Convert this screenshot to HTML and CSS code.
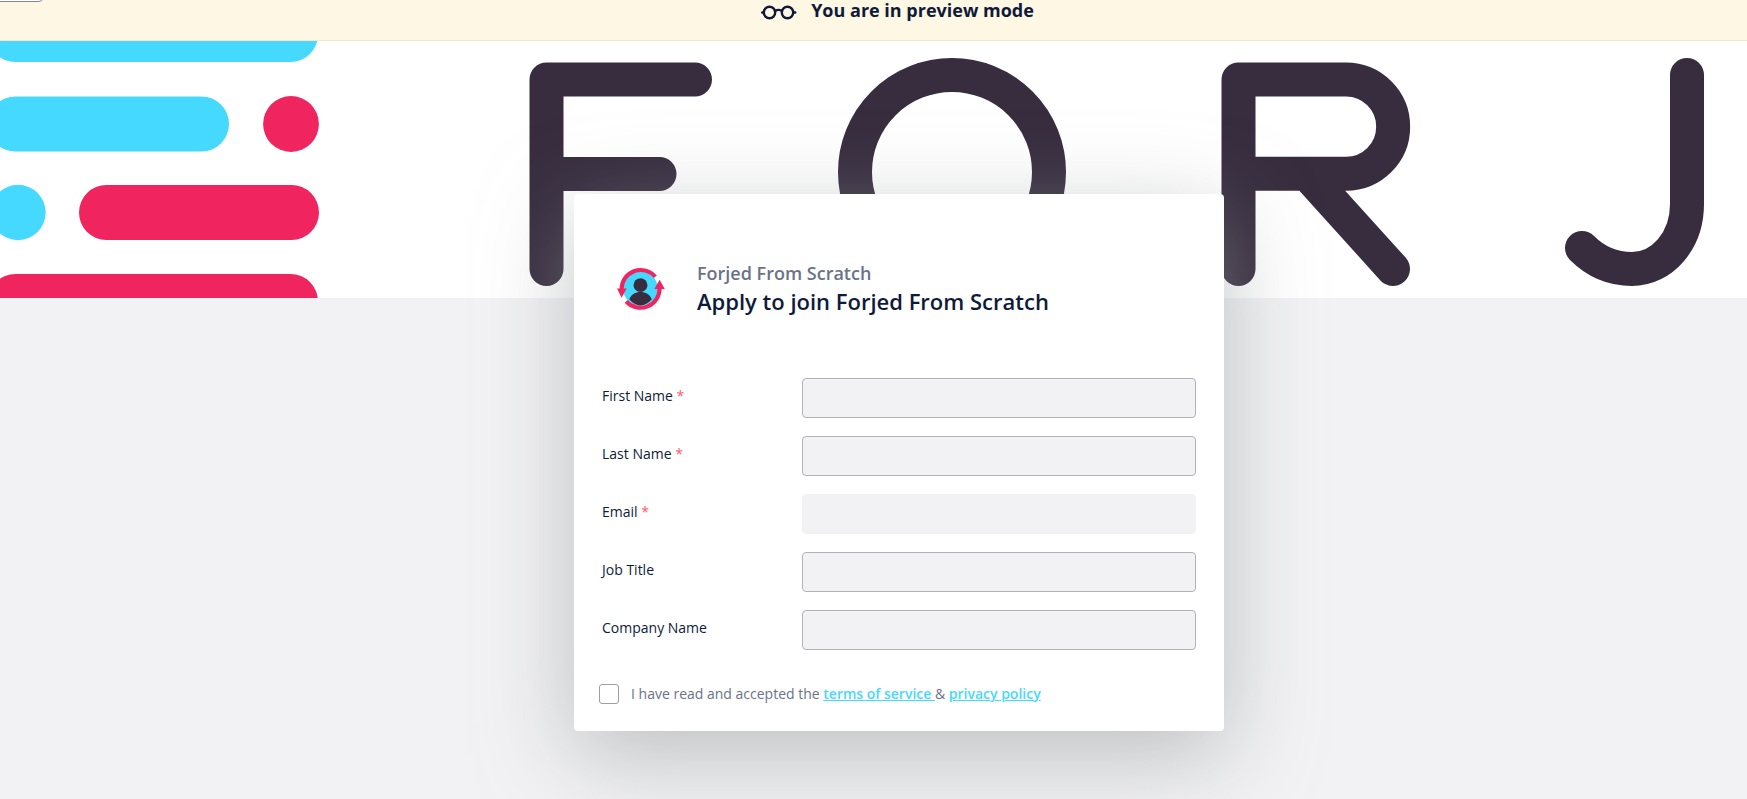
FILE: index.html
```
<!DOCTYPE html>
<html lang="en">
<head>
    <meta charset="UTF-8">
    <meta name="viewport" content="width=device-width, initial-scale=1.0">
    <title>Apply to join Forjed From Scratch</title>
    <link rel="stylesheet" href="styles.css">
</head>
<body>
<div class="preview-bar">
    <button type="button" class="back-button" aria-label="Back"></button>
    <svg class="glasses" viewBox="0 0 36 16" aria-hidden="true">
        <circle cx="8.500" cy="8.500" r="5.700"/>
        <circle cx="26.500" cy="8.500" r="5.700"/>
        <path d="M1.200 8.500H2.800M32.500 8.500h1.800M14 7Q17.500 4.700 21 7"/>
    </svg>
    <span>You are in preview mode</span>
</div>

<div class="cover">
    <svg class="cover-art" viewBox="0 0 1747 257" preserveAspectRatio="xMinYMid slice" aria-hidden="true">
        <g class="cyan">
            <rect x="-12" y="-34" width="330" height="55" rx="27.500"/>
            <rect x="-12" y="55.500" width="241" height="55" rx="27.500"/>
            <circle cx="18" cy="171.500" r="27.700"/>
        </g>
        <g class="pink">
            <circle cx="291" cy="83" r="27.900"/>
            <rect x="79" y="144" width="240" height="55" rx="27.500"/>
            <rect x="-12" y="233" width="330" height="55" rx="27.500"/>
        </g>
        <g class="mark">
            <path d="M546.500 228V38.500H695M546.500 133H659.500"/>
            <circle cx="952" cy="131" r="97"/>
            <path d="M1238.500 228V38.500H1346a47 47 0 0 1 0 94.300H1238.500M1307 132.800L1393 228"/>
            <path d="M1687 34V163C1687 200 1662 228 1632 228C1614 228 1596 221 1582 207"/>
        </g>
    </svg>
</div>

<main class="page">
    <form class="card">
        <header class="card-header">
            <svg class="logo" viewBox="1 -1 47 47" aria-hidden="true">
                <circle class="cyan" cx="24" cy="24" r="17"/>
                <path class="person" d="M13 34.500C15 29.500 19 27.500 24 27.500S33 29.500 35 34.500Q30 40.500 24 40.500T13 34.500z"/>
                <circle class="person" cx="24" cy="20.700" r="6.800"/>
                <path class="ring" d="M5.500 25A18.700 18.700 0 0 1 38.500 12.500M42.700 23.500A18.700 18.700 0 0 1 10 36.500"/>
                <path class="pink" d="M1 24H10.500L5.500 33zM37.500 24.500H47.800L42.700 15.500z"/>
            </svg>
            <div>
                <p class="company">Forjed From Scratch</p>
                <h1>Apply to join Forjed From Scratch</h1>
            </div>
        </header>
        <div class="field">
            <label for="firstName">First Name <span class="required">*</span></label>
            <input type="text" id="firstName">
        </div>
        <div class="field">
            <label for="lastName">Last Name <span class="required">*</span></label>
            <input type="text" id="lastName">
        </div>
        <div class="field">
            <label for="email">Email <span class="required">*</span></label>
            <input type="email" id="email" class="plain">
        </div>
        <div class="field">
            <label for="jobTitle">Job Title</label>
            <input type="text" id="jobTitle">
        </div>
        <div class="field">
            <label for="companyName">Company Name</label>
            <input type="text" id="companyName">
        </div>
        <div class="terms">
            <input type="checkbox" id="terms">
            <label for="terms">I have read and accepted the <a href="#terms-of-service">terms of service </a>&amp; <a href="#privacy-policy">privacy policy</a></label>
        </div>
    </form>
</main>
</body>
</html>
```
FILE: styles.css
```
* {
    box-sizing: border-box;
    margin: 0;
    padding: 0;
}
body {
    min-height: 100vh;
    font-family: "Open Sans", "Noto Sans", sans-serif;
    font-size: 14px;
    line-height: 20px;
    color: #0f1a3a;
    background-color: #f2f2f4;
    overflow-x: hidden;
}

/* preview bar */
.preview-bar {
    position: relative;
    display: flex;
    justify-content: center;
    gap: 14px;
    padding: 0 0 20px 48px;
    font-size: 18px;
    font-weight: 700;
    line-height: 20px;
    background-color: #fef7e3;
    border-bottom: 1px solid #fde6bd;
}
.back-button {
    position: absolute;
    top: -34px;
    left: -8px;
    width: 51px;
    height: 36px;
    background-color: #fff;
    border: 1px solid #83858f;
    border-radius: 4px;
}
.glasses {
    width: 36px;
    height: 16px;
    margin-top: 4px;
    fill: none;
    stroke: #0f1a3a;
    stroke-width: 2.4;
    stroke-linecap: round;
}

/* cover */
.cover {
    height: 257px;
    background-color: #fff;
}
.cover-art {
    display: block;
    width: 100%;
    height: 100%;
}
.cyan {
    fill: #46d9ff;
}
.pink {
    fill: #f02560;
}
.mark {
    fill: none;
    stroke: #372d3f;
    stroke-width: 34;
    stroke-linecap: round;
    stroke-linejoin: round;
}

/* application form */
.page {
    padding: 0 0 67px 51px;
}
.card {
    position: relative;
    max-width: 650px;
    margin: -104px auto 0;
    padding: 65px 28px 27px;
    background-color: #fff;
    border-radius: 4px;
    box-shadow: 0 24px 90px rgba(152, 156, 158, 0.6);
}
.card-header {
    display: flex;
    align-items: center;
    gap: 32px;
    padding: 0 15px;
    margin-bottom: 63px;
}
.logo {
    width: 48px;
    height: 48px;
}
.person {
    fill: #372d3f;
}
.ring {
    fill: none;
    stroke: #f02560;
    stroke-width: 4;
}
.company {
    font-size: 18px;
    font-weight: 600;
    line-height: 28px;
    color: #6b7288;
}
h1 {
    font-size: 22px;
    font-weight: 600;
    line-height: 28px;
}
.field {
    display: flex;
    margin-bottom: 18px;
}
.field label {
    width: 200px;
    padding-top: 8px;
}
.required {
    color: #ff5a6e;
}
.field input {
    flex: 1;
    min-width: 0;
    height: 40px;
    padding: 0 12px;
    font: inherit;
    color: inherit;
    background-color: #f2f2f4;
    border: 1px solid #b1b2b6;
    border-radius: 4px;
}
.field .plain {
    border-color: #f2f2f4;
}
.terms {
    display: flex;
    align-items: center;
    gap: 12px;
    margin: 34px 0 0 -3px;
    color: #6b7288;
}
.terms input {
    appearance: none;
    width: 20px;
    height: 20px;
    background-color: #fff;
    border: 1px solid #9a9eb0;
    border-radius: 3px;
}
.terms input:checked {
    background-color: #46d9ff;
}
.terms a {
    font-weight: 600;
    color: #46d9ff;
}
```
